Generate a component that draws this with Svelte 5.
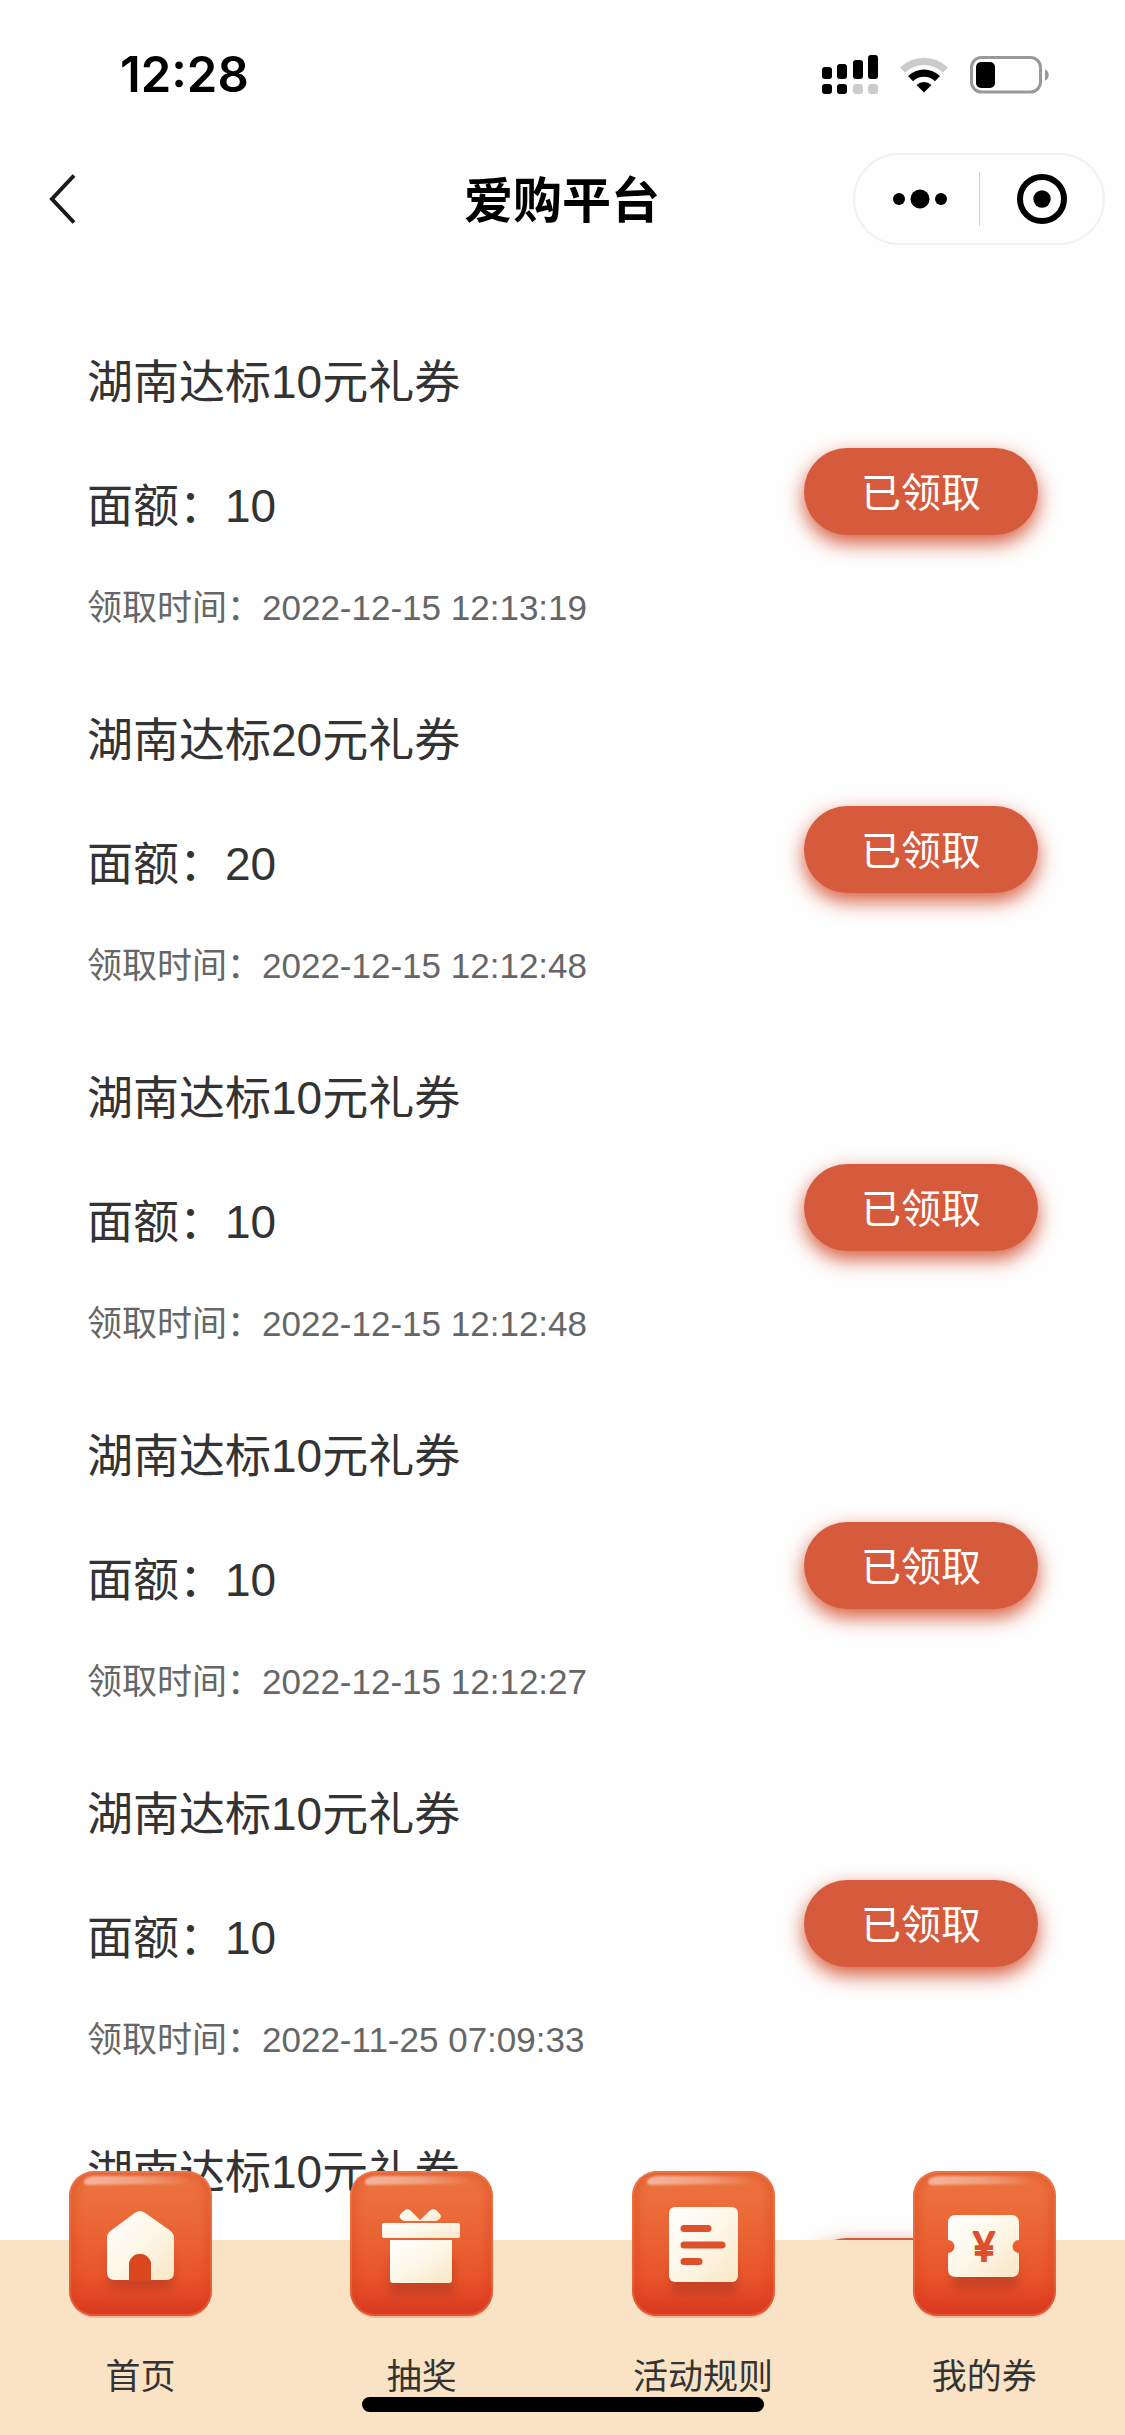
<script>
  const coupons = [
    { value: 10, time: '2022-12-15 12:13:19' },
    { value: 20, time: '2022-12-15 12:12:48' },
    { value: 10, time: '2022-12-15 12:12:48' },
    { value: 10, time: '2022-12-15 12:12:27' },
    { value: 10, time: '2022-11-25 07:09:33' },
    { value: 10, time: null },
  ];

  const tabs = [
    { id: 'home', label: '首页' },
    { id: 'draw', label: '抽奖' },
    { id: 'rules', label: '活动规则' },
    { id: 'coupons', label: '我的券' },
  ];
</script>

<div class="screen">
  <div class="status">
    <span class="clock">12:28</span>
    <div class="indicators">
      <svg class="signal" viewBox="0 0 56 40" aria-hidden="true">
        <rect x="0" y="12" width="10" height="12" rx="3" />
        <rect x="15" y="9" width="10" height="15" rx="3" />
        <rect x="31" y="5" width="10" height="19" rx="3" />
        <rect x="46" y="0" width="10" height="24" rx="3" />
        <rect x="0" y="29" width="10" height="10" rx="3" />
        <rect x="15" y="29" width="10" height="10" rx="3" />
        <rect class="faint" x="31" y="29" width="10" height="10" rx="3" />
        <rect class="faint" x="46" y="29" width="10" height="10" rx="3" />
      </svg>
      <svg class="wifi" viewBox="0 0 50 36" aria-hidden="true">
        <path class="faint" d="M1 10.5A34.5 34.5 0 0 1 49 10.5L44 15.600A27.400 27.400 0 0 0 6 15.600Z" />
        <path d="M9 19A23 23 0 0 1 41 19L36 24.200A15.800 15.800 0 0 0 14 24.200Z" />
        <path d="M17.500 28A11 11 0 0 1 32.500 28L25 35.500Z" />
      </svg>
      <svg class="battery" viewBox="0 0 80 38" aria-hidden="true">
        <rect class="shell" x="1.500" y="1.500" width="69" height="34.500" rx="10" />
        <rect x="6" y="6" width="19" height="26" rx="5" />
        <path class="nub" d="M75 13.500C80 15 80 23 75 24.500Z" />
      </svg>
    </div>
  </div>

  <header class="nav">
    <button class="back" aria-label="返回">
      <svg viewBox="0 0 28 50" aria-hidden="true"><path d="M25 1.500L3 25L25 48.500" /></svg>
    </button>
    <h1>爱购平台</h1>
    <div class="capsule">
      <button class="more" aria-label="更多">
        <svg class="dots" viewBox="0 0 54 20" aria-hidden="true">
          <circle cx="6" cy="10" r="6" />
          <circle cx="27" cy="10" r="9.500" />
          <circle cx="48" cy="10" r="6" />
        </svg>
      </button>
      <button class="close" aria-label="关闭">
        <svg class="target" viewBox="0 0 50 50" aria-hidden="true">
          <circle class="ring" cx="25" cy="25" r="22" />
          <circle cx="25" cy="25" r="8.700" />
        </svg>
      </button>
    </div>
  </header>

  <main>
    <ul>
      {#each coupons as coupon}
        <li>
          <div class="info">
            <h2>湖南达标{coupon.value}元礼券</h2>
            {#if coupon.time}
              <p class="amount">面额：{coupon.value}</p>
              <p class="time">领取时间：{coupon.time}</p>
            {/if}
          </div>
          <button class="claimed">已领取</button>
        </li>
      {/each}
    </ul>
  </main>

  <nav class="tabs">
    {#each tabs as tab}
      <a href="#{tab.id}">
        <svg class="tile" viewBox="0 0 143 146" aria-hidden="true">
          <defs>
            <linearGradient id="face-{tab.id}" x1="0" y1="0" x2="0" y2="1">
              <stop offset="0" stop-color="#ec7440" />
              <stop offset="0.3" stop-color="#ea6a38" />
              <stop offset="0.7" stop-color="#e9562c" />
              <stop offset="1" stop-color="#d93a20" />
            </linearGradient>
            <linearGradient id="cream-{tab.id}" x1="0" y1="0" x2="1" y2="1">
              <stop offset="0" stop-color="#ffffff" />
              <stop offset="0.5" stop-color="#fdf7e8" />
              <stop offset="1" stop-color="#fae6c4" />
            </linearGradient>
            <linearGradient id="gloss-{tab.id}" x1="0" y1="0" x2="1" y2="0">
              <stop offset="0" stop-color="#fff" stop-opacity="0.5" />
              <stop offset="0.5" stop-color="#fff" stop-opacity="0.35" />
              <stop offset="1" stop-color="#fff" stop-opacity="0" />
            </linearGradient>
            <filter id="soft-{tab.id}" x="-30%" y="-30%" width="160%" height="160%">
              <feGaussianBlur stdDeviation="5" />
            </filter>
            <filter id="sheen-{tab.id}" x="-10%" y="-50%" width="120%" height="200%">
              <feGaussianBlur stdDeviation="1" />
            </filter>
            <clipPath id="clip-{tab.id}"><rect x="0" y="0" width="143" height="145" rx="25" /></clipPath>
          </defs>
          <rect class="under" x="1" y="3" width="141" height="144" rx="25" />
          <rect x="0" y="0" width="143" height="145" rx="25" fill="url(#face-{tab.id})" />
          <g clip-path="url(#clip-{tab.id})">
            <rect class="edge" x="0" y="0" width="143" height="145" rx="25" filter="url(#soft-{tab.id})" />
            <rect class="rim" x="1" y="1" width="141" height="143" rx="24" />
          </g>
          <path d="M15 11C16 6 22 5 30 5H106C116 5 122 9 124 14C108 13 60 13 20 14C16 14 15 13 15 11Z" fill="url(#gloss-{tab.id})" filter="url(#sheen-{tab.id})" />
          {#if tab.id === 'home'}
            <rect class="shade" x="40" y="84" width="64" height="34" filter="url(#soft-{tab.id})" />
            <path d="M66.500 41.500Q71 38.500 75.500 41.500L101 59.500Q105 62.500 105 67V101Q105 109 97 109H82V94A11 11 0 0 0 60 94V109H46Q38 109 38 101V67Q38 62.500 42 59.500Z" fill="url(#cream-{tab.id})" />
            <path class="doorway" d="M60 110V94A11 11 0 0 1 82 94V110Z" />
          {:else if tab.id === 'draw'}
            <rect class="shade" x="40" y="88" width="64" height="36" filter="url(#soft-{tab.id})" />
            <path d="M54.500 39.500Q57 37 60.500 39.500L70 49L80 39.500Q83.500 37 86.500 39.500L90 43Q92 46 89.500 48Q88 50 85 50H55Q52.500 50 51 48Q48.500 46 50.500 43Z" fill="url(#cream-{tab.id})" />
            <rect x="32" y="52" width="78" height="15" rx="2" fill="url(#cream-{tab.id})" />
            <path d="M40 69H102V109Q102 112 99 112H43Q40 112 40 109Z" fill="url(#cream-{tab.id})" />
          {:else if tab.id === 'rules'}
            <rect class="shade" x="40" y="88" width="64" height="35" filter="url(#soft-{tab.id})" />
            <rect x="37" y="36" width="69" height="75" rx="6" fill="url(#cream-{tab.id})" />
            <path class="lines" d="M52 57.500H76M52 74H90M52 90.500H67" />
          {:else}
            <rect class="shade" x="40" y="84" width="64" height="34" filter="url(#soft-{tab.id})" />
            <path d="M43 44H98Q106 44 106 52V69A6.500 6.500 0 0 0 106 82V98Q106 106 98 106H43Q35 106 35 98V82A6.500 6.500 0 0 0 35 69V52Q35 44 43 44Z" fill="url(#cream-{tab.id})" />
            <text class="yuan" x="71" y="90">¥</text>
          {/if}
        </svg>
        <span>{tab.label}</span>
      </a>
    {/each}
    <div class="home-bar"></div>
  </nav>
</div>

<style>
  :global(body) {
    margin: 0;
    background: #fefefe;
  }
  .screen {
    display: flex;
    flex-direction: column;
    height: 100vh;
    overflow: hidden;
    background: #fefefe;
    color: #333;
    font-family: 'Liberation Sans', 'Noto Sans CJK SC', sans-serif;
  }
  button {
    padding: 0;
    border: 0;
    background: none;
    font-family: inherit;
    cursor: pointer;
  }
  svg {
    display: block;
  }
  h1, h2, p, ul {
    margin: 0;
    padding: 0;
    font-weight: 400;
  }

  .status {
    display: flex;
    flex: none;
    align-items: center;
    justify-content: space-between;
    height: 150px;
    padding: 0 75px 0 120px;
    color: #000;
  }
  .clock {
    font: 600 49px/60px Inter, sans-serif;
  }
  .indicators {
    display: flex;
    align-items: center;
    gap: 21px;
  }
  .signal { width: 56px; height: 40px; }
  .wifi { width: 50px; height: 36px; }
  .battery { width: 80px; height: 38px; }
  .faint { fill: #ccc; }
  .shell { fill: none; stroke: #999; stroke-width: 3; }
  .nub { fill: #999; }

  .nav {
    display: grid;
    flex: none;
    grid-template-columns: 1fr auto 1fr;
    align-items: center;
    height: 98px;
    padding: 0 20px 0 49px;
  }
  .back { justify-self: start; }
  .back svg { width: 28px; height: 50px; }
  .back path { fill: none; stroke: #1a1a1a; stroke-width: 4; }
  h1 {
    margin-right: 30px;
    padding-top: 3px;
    color: #000;
    font-size: 49px;
    font-weight: 700;
    line-height: 60px;
  }
  .capsule {
    display: flex;
    justify-self: end;
    align-items: center;
    box-sizing: border-box;
    width: 252px;
    height: 92px;
    border: 2px solid #f2f2f2;
    border-radius: 46px;
  }
  .capsule button {
    display: flex;
    flex: none;
    align-items: center;
    justify-content: center;
    box-sizing: border-box;
    width: 50%;
    height: 54px;
  }
  .capsule .more { padding-left: 6px; }
  .capsule .close { border-left: 1px solid #d0d0d0; }
  .dots { width: 54px; height: 20px; }
  .target { width: 50px; height: 50px; }
  .ring { fill: none; stroke: #000; stroke-width: 6; }

  main {
    flex: 1;
    min-height: 0;
    overflow: hidden auto;
    scrollbar-width: none;
  }
  ul {
    padding: 64px 87px 0;
    list-style: none;
  }
  li {
    display: flex;
    align-items: center;
    justify-content: space-between;
    padding: 38px 0;
  }
  .info {
    display: flex;
    flex-direction: column;
    min-height: 282px;
  }
  h2, .amount {
    font-size: 46px;
    line-height: 64px;
  }
  .amount { margin: 60px 0 46px; }
  .time {
    color: #666;
    font-size: 35px;
    line-height: 48px;
  }
  .claimed {
    width: 234px;
    height: 87px;
    padding-bottom: 3px;
    border-radius: 44px;
    background: #d65a3c;
    box-shadow: 0 8px 20px #d65a3c;
    color: #fff;
    font-size: 40px;
  }

  .tabs {
    position: relative;
    display: grid;
    flex: none;
    grid-template-columns: repeat(4, 1fr);
    padding-bottom: 34px;
    background: #fae3c5;
  }
  .tabs a {
    display: flex;
    flex-direction: column;
    align-items: center;
    gap: 36px;
    margin-top: -69px;
    color: #333;
    font-size: 35px;
    line-height: 48px;
    text-decoration: none;
  }
  .tile { width: 143px; height: 146px; overflow: visible; }
  .under { fill: #d9351f; opacity: 0.25; }
  .edge { fill: none; stroke: #d93a1c; stroke-width: 10; opacity: 0.4; }
  .rim { fill: none; stroke: #f29a68; stroke-width: 2; opacity: 0.3; }
  .shade { fill: #b53a20; opacity: 0.6; }
  .doorway { fill: #d9471f; }
  .lines { stroke: #de4f2b; stroke-width: 7; stroke-linecap: round; }
  .yuan {
    fill: #de4f2b;
    stroke: #de4f2b;
    stroke-width: 2;
    stroke-linejoin: round;
    font: 400 40px Inter, sans-serif;
    text-anchor: middle;
  }
  .home-bar {
    position: absolute;
    bottom: 23px;
    left: 50%;
    width: 402px;
    height: 15px;
    margin-left: -201px;
    border-radius: 8px;
    background: #000;
  }
</style>
